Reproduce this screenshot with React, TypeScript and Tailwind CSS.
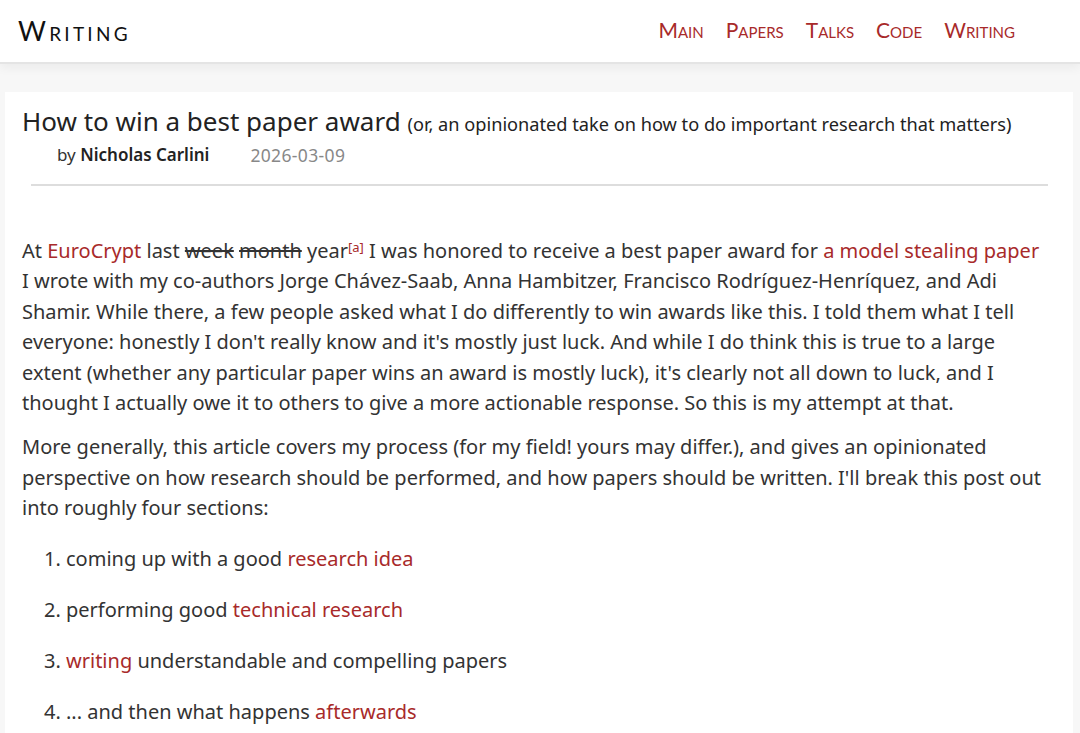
import React from "react";

const link = "text-[#a82a2a]";

export default function App() {
  return (
    <div className="min-h-screen bg-[#f7f7f7] text-[#333]" style={{ fontFamily: "'Noto Sans', Inter, sans-serif" }}>
      <header className="h-[64px] bg-white border-b-2 border-[#e4e4e4] shadow-[0_4px_10px_rgba(0,0,0,0.05)] flex items-center justify-between pl-[18px] pr-[65px]" style={{ fontFamily: "Lato, 'Noto Sans', sans-serif" }}>
        <div className="text-[27px] tracking-[0.12em] text-[#111] [font-variant:small-caps] leading-none pb-[2px]">Writing</div>
        <nav className="flex gap-[22px] text-[21px] text-[#a82a2a] [font-variant:small-caps] leading-none pb-[3px]">
          <span>Main</span>
          <span>Papers</span>
          <span>Talks</span>
          <span>Code</span>
          <span>Writing</span>
        </nav>
      </header>
      <main className="mt-[28px] ml-[5px] mr-[7px] bg-white pl-[17px] pr-[25px] pt-[11px] pb-[20px]">
        <h1 className="text-[26px] leading-[36px] text-[#222]">
          How to win a best paper award <span className="text-[18.2px]">(or, an opinionated take on how to do important research that matters)</span>
        </h1>
        <div className="pl-[35px] text-[17px] leading-[26px] flex gap-[41px]">
          <span>by <b className="font-semibold text-[#222]">Nicholas Carlini</b></span>
          <span className="text-[#888] text-[17.5px] tracking-[0.02em]">2026-03-09</span>
        </div>
        <hr className="mt-[16px] ml-[9px] border-t-2 border-[#ddd]" />
        <div className="mt-[50px] text-[20px] leading-[30.4px]">
          <p>
            At <span className={link}>EuroCrypt</span> last <s>week</s> <s>month</s> year<sup className={`${link} text-[13px]`}>[a]</sup> I was honored to receive a best paper award for <span className={link}>a model stealing paper</span> I wrote with my co-authors Jorge Chávez-Saab, Anna Hambitzer, Francisco Rodríguez-Henríquez, and Adi Shamir. While there, a few people asked what I do differently to win awards like this. I told them what I tell everyone: honestly I don't really know and it's mostly just luck. And while I do think this is true to a large extent (whether any particular paper wins an award is mostly luck), it's clearly not all down to luck, and I thought I actually owe it to others to give a more actionable response. So this is my attempt at that.
          </p>
          <p className="mt-[14px]">
            More generally, this article covers my process (for my field! yours may differ.), and gives an opinionated perspective on how research should be performed, and how papers should be written. I'll break this post out into roughly four sections:
          </p>
          <ol className="list-decimal pl-[44px] mt-[20px] flex flex-col gap-[20.7px]">
            <li>coming up with a good <span className={link}>research idea</span></li>
            <li>performing good <span className={link}>technical research</span></li>
            <li><span className={link}>writing</span> understandable and compelling papers</li>
            <li>... and then what happens <span className={link}>afterwards</span></li>
          </ol>
        </div>
      </main>
    </div>
  );
}
